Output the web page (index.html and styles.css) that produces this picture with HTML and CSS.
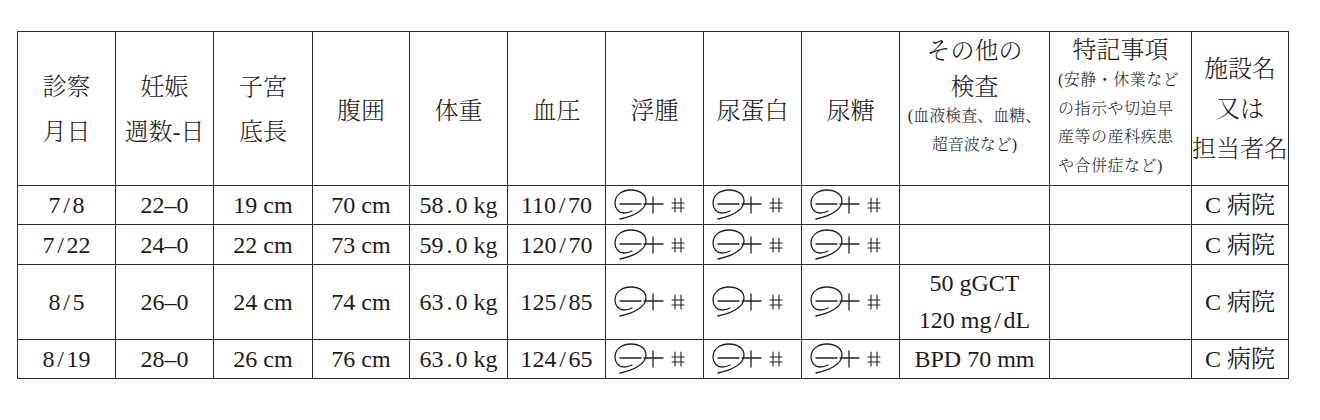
FILE: index.html
```html
<!DOCTYPE html>
<html lang="ja">
<head>
<meta charset="utf-8">
<title>妊婦健診記録</title>
<link rel="stylesheet" href="styles.css">
</head>
<body>
<svg class="defs" width="0" height="0" aria-hidden="true">
  <defs>
    <g id="sym" fill="none" stroke="#222" stroke-width="1.3" stroke-linecap="round">
      <path d="M14 33 C28 30 40 24 40 15 C40 8 33 4 25 4 C15 4 9 10 9 17 C9 23 13 27 18 27 C21 27 24 26 26 25"/>
      <path d="M14 18 H35"/>
      <path d="M38 18 H57 M47 11 V27"/>
      <path d="M69 12 V26 M75 12 V26 M66 17 H78 M66 22 H78" stroke-width="1.1"/>
    </g>
  </defs>
</svg>
<div class="sheet">
<table class="record">
  <colgroup>
    <col class="c98"><col class="c98"><col class="c99"><col class="c97"><col class="c98"><col class="c98"><col class="c98"><col class="c98"><col class="c98"><col class="c150"><col class="c142"><col class="c97">
  </colgroup>
  <thead>
    <tr class="head">
      <th><div class="two">診察<br>月日</div></th>
      <th><div class="two">妊娠<br>週数-日</div></th>
      <th><div class="two">子宮<br>底長</div></th>
      <th>腹囲</th>
      <th>体重</th>
      <th>血圧</th>
      <th>浮腫</th>
      <th>尿蛋白</th>
      <th>尿糖</th>
      <th class="top">
        <div class="big">その他の<br>検査</div>
        <div class="small">(血液検査、血糖、<br>超音波など)</div>
      </th>
      <th class="top note">
        <div class="title">特記事項</div>
        <div class="small left">(安静・休業など<br>の指示や切迫早<br>産等の産科疾患<br>や合併症など)</div>
      </th>
      <th><div class="three">施設名<br>又は<br>担当者名</div></th>
    </tr>
  </thead>
  <tbody>
    <tr class="r1">
      <td>7<span class="hw">/</span>8</td><td>22–0</td><td>19 cm</td><td>70 cm</td><td>58<span class="hw">.</span>0 kg</td><td>110<span class="hw">/</span>70</td>
      <td class="mk"><svg viewBox="0 0 98 38" width="98" height="38"><use href="#sym"/></svg></td>
      <td class="mk"><svg viewBox="0 0 98 38" width="98" height="38"><use href="#sym"/></svg></td>
      <td class="mk"><svg viewBox="0 0 98 38" width="98" height="38"><use href="#sym"/></svg></td>
      <td></td><td></td><td>C 病院</td>
    </tr>
    <tr class="r2">
      <td>7<span class="hw">/</span>22</td><td>24–0</td><td>22 cm</td><td>73 cm</td><td>59<span class="hw">.</span>0 kg</td><td>120<span class="hw">/</span>70</td>
      <td class="mk"><svg viewBox="0 0 98 38" width="98" height="38"><use href="#sym"/></svg></td>
      <td class="mk"><svg viewBox="0 0 98 38" width="98" height="38"><use href="#sym"/></svg></td>
      <td class="mk"><svg viewBox="0 0 98 38" width="98" height="38"><use href="#sym"/></svg></td>
      <td></td><td></td><td>C 病院</td>
    </tr>
    <tr class="r3">
      <td>8<span class="hw">/</span>5</td><td>26–0</td><td>24 cm</td><td>74 cm</td><td>63<span class="hw">.</span>0 kg</td><td>125<span class="hw">/</span>85</td>
      <td class="mk"><svg viewBox="0 0 98 38" width="98" height="38"><use href="#sym"/></svg></td>
      <td class="mk"><svg viewBox="0 0 98 38" width="98" height="38"><use href="#sym"/></svg></td>
      <td class="mk"><svg viewBox="0 0 98 38" width="98" height="38"><use href="#sym"/></svg></td>
      <td class="multi">50 gGCT<br>120 mg<span class="hw">/</span>dL</td><td></td><td>C 病院</td>
    </tr>
    <tr class="r4">
      <td>8<span class="hw">/</span>19</td><td>28–0</td><td>26 cm</td><td>76 cm</td><td>63<span class="hw">.</span>0 kg</td><td>124<span class="hw">/</span>65</td>
      <td class="mk"><svg viewBox="0 0 98 38" width="98" height="38"><use href="#sym"/></svg></td>
      <td class="mk"><svg viewBox="0 0 98 38" width="98" height="38"><use href="#sym"/></svg></td>
      <td class="mk"><svg viewBox="0 0 98 38" width="98" height="38"><use href="#sym"/></svg></td>
      <td>BPD 70 mm</td><td></td><td>C 病院</td>
    </tr>
  </tbody>
</table>
</div>
</body>
</html>
```
FILE: styles.css
```css
html, body {
  margin: 0;
  background: #fff;
}
body {
  font-family: "Liberation Serif", "Noto Serif CJK JP", "Noto Sans CJK JP", serif;
  color: #1c1c1c;
  font-size: 24px;
}
.defs {
  position: absolute;
  width: 0;
  height: 0;
  overflow: hidden;
}
.sheet {
  padding: 31px 0 0 17px;
}
.record {
  border-collapse: collapse;
  table-layout: fixed;
  width: 1272px;
}
.c98 { width: 98px; }
.c99 { width: 99px; }
.c97 { width: 97px; }
.c150 { width: 150px; }
.c142 { width: 142px; }
.record th,
.record td {
  border: 1px solid #2b2b2b;
  padding: 0;
  text-align: center;
  vertical-align: middle;
  font-weight: 300;
  white-space: nowrap;
  overflow: hidden;
}
.head { height: 154px; }
.r1 { height: 39px; }
.r2 { height: 40px; }
.r3 { height: 75px; }
.r4 { height: 39px; }
.record td { line-height: 30px; font-weight: normal; }
.two { line-height: 45px; padding-top: 2px; }
.three { line-height: 40px; }
.record th.top { vertical-align: top; }
.big { line-height: 36px; padding-top: 1px; }
.small {
  font-size: 16px;
  line-height: 29px;
  margin-top: -4px;
}
.note .title { line-height: 32px; padding-top: 2px; }
.note .small { margin-top: 0; line-height: 28.5px; letter-spacing: 0.5px; }
.small.left { text-align: left; padding-left: 8px; }
.hw {
  display: inline-block;
  width: 0.5em;
  text-align: center;
}
.record td.multi { line-height: 37px; }
.record td.mk svg { display: block; margin: 0 auto; }
```
